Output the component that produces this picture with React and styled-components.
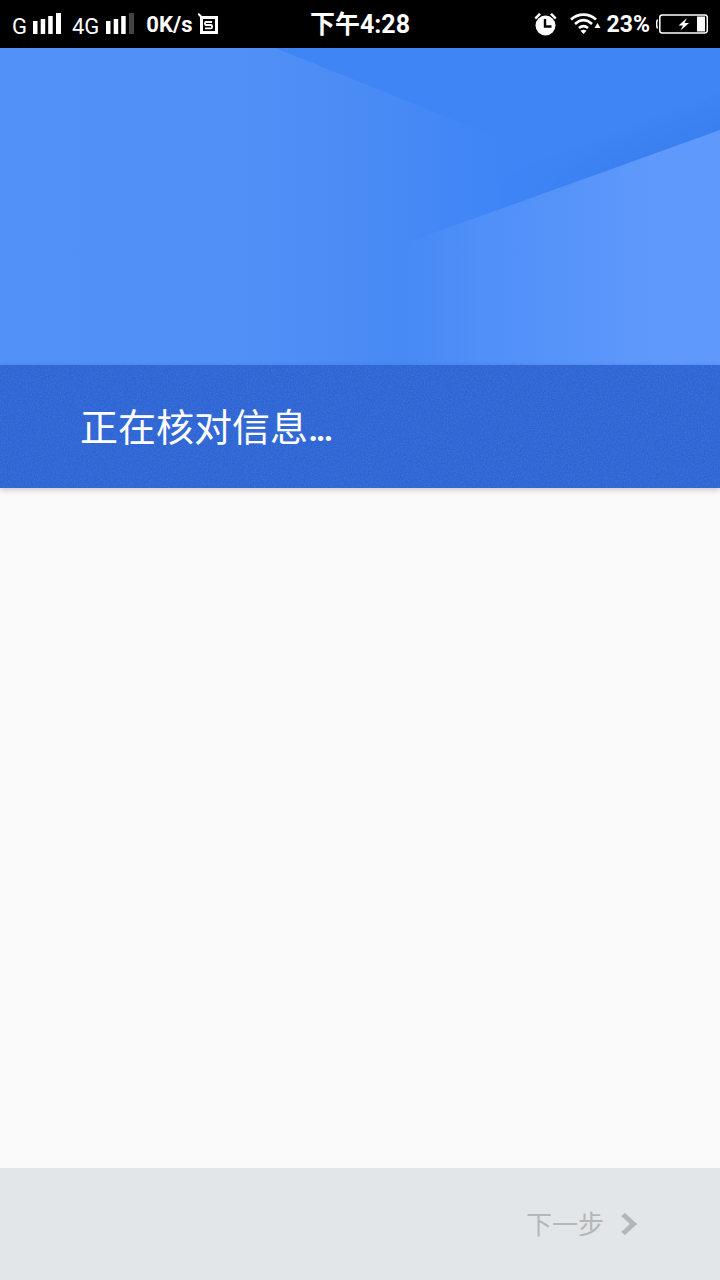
import React from "react";
import styled, { createGlobalStyle } from "styled-components";

const GlobalStyle = createGlobalStyle`
  html, body {
    margin: 0;
    padding: 0;
    background: #fafafa;
  }
`;

const Page = styled.div`
  width: 720px;
  height: 1280px;
  display: flex;
  flex-direction: column;
  overflow: hidden;
  background: #fafafa;
  font-family: Roboto, "Noto Sans CJK SC", sans-serif;
`;

const StatusBar = styled.div`
  height: 48px;
  flex: none;
  background: #000;
  color: #fff;
  display: grid;
  grid-template-columns: 1fr auto 1fr;
  align-items: center;
  padding: 0 12px;
  box-sizing: border-box;
`;

const StatusLeft = styled.div`
  display: flex;
  align-items: center;
`;

const StatusRight = styled.div`
  display: flex;
  align-items: center;
  justify-content: flex-end;
`;

const Net = styled.span`
  font-size: 22px;
  line-height: 26px;
  margin: 5px 0 0 ${p => p.$left || 0}px;
`;

const Speed = styled.span`
  font-size: 22px;
  font-weight: 700;
  line-height: 26px;
  margin: 2px 0 0 11px;
`;

const Clock = styled.span`
  font-size: 25px;
  font-weight: 700;
  line-height: 30px;
  margin-top: 1px;
`;

const Percent = styled.span`
  font-size: 23px;
  font-weight: 700;
  line-height: 26px;
  margin: 2px 0 0 5px;
`;

const Icon = styled.svg`
  display: block;
  flex: none;
  margin-left: ${p => p.$left || 0}px;
`;

const Hero = styled.div`
  height: 317px;
  flex: none;
`;

const HeroArt = styled.svg`
  display: block;
  width: 720px;
  height: 317px;
`;

const Band = styled.div`
  height: 123px;
  flex: none;
  background: #2c64d4;
  box-shadow: 0 2px 6px rgba(0, 0, 0, 0.2);
  display: flex;
  align-items: center;
  padding-left: 80px;
  padding-top: 2px;
  box-sizing: border-box;
  position: relative;
`;

const BandNoise = styled.svg`
  position: absolute;
  left: 0;
  top: 0;
  width: 720px;
  height: 123px;
  opacity: 0.1;
`;

const Title = styled.div`
  position: relative;
  color: #fff;
  font-size: 38px;
  line-height: 48px;
`;

const Dots = styled.span`
  letter-spacing: -3px;
  font-weight: 500;
`;

const Body = styled.div`
  flex: 1;
`;

const Footer = styled.div`
  height: 112px;
  flex: none;
  background: #e2e6e9;
  display: flex;
  align-items: center;
  justify-content: flex-end;
  padding-right: 82px;
  box-sizing: border-box;
`;

const NextLabel = styled.span`
  color: #b3b7ba;
  font-size: 26px;
  line-height: 32px;
  margin: 2px 16px 0 0;
`;

const Signal = ({ last, left }) => (
  <Icon $left={left} width="30" height="22" viewBox="0 0 30 22">
    <rect x="1" y="8" width="4.500" height="13" fill="#fff" />
    <rect x="8.700" y="6" width="4.500" height="15" fill="#fff" />
    <rect x="16.200" y="3" width="4.500" height="18" fill="#fff" />
    <rect x="24" y="0" width="5" height="21" fill={last} />
  </Icon>
);

const SimIcon = () => (
  <Icon $left={6} width="20" height="22" viewBox="0 0 20 22">
    <path d="M0 0.500 3.500 4" fill="none" stroke="#fff" strokeWidth="2" />
    <rect x="3.500" y="4.500" width="15" height="15" fill="none" stroke="#fff" strokeWidth="3" />
    <path
      d="M14 9H8Q7 9 7 10.300V11Q7 12 8 12H13Q14 12 14 13V14Q14 15.300 13 15.300H7"
      fill="none"
      stroke="#fff"
      strokeWidth="1.800"
    />
  </Icon>
);

const AlarmIcon = () => (
  <Icon $left={2} width="23" height="24" viewBox="0 0 23 24">
    <circle cx="11.500" cy="13.500" r="10" fill="#fff" />
    <path d="M0.500 5.500 5 1 7 2.500 2 7.500ZM22.500 5.500 18 1 16 2.500 21 7.500Z" fill="#fff" />
    <path d="M11 7v7.500h6.500" fill="none" stroke="#000" strokeWidth="2.400" />
  </Icon>
);

const WifiIcon = () => (
  <Icon $left={13} width="32" height="22" viewBox="0 0 32 22">
    <path d="M1 6.500C8 0 19 0 26 6.500" fill="none" stroke="#fff" strokeWidth="2.600" />
    <path d="M5 11C10.500 6 16.500 6 22 11" fill="none" stroke="#fff" strokeWidth="2.600" />
    <path d="M9 15C12 12.500 15 12.500 18 15" fill="none" stroke="#fff" strokeWidth="2.600" />
    <path d="M13.500 21 10.500 17.800C12.500 16.500 14.500 16.500 16.500 17.800Z" fill="#fff" />
    <path d="M24.500 15 27.500 10 30.500 15Z" fill="#fff" />
  </Icon>
);

const BatteryIcon = () => (
  <Icon $left={6} width="52" height="20" viewBox="0 0 52 20">
    <path d="M1.500 5.500C0.500 8 0.500 12 1.500 14.500" fill="none" stroke="#fff" strokeWidth="1.500" />
    <rect x="3.800" y="1" width="47.500" height="18" rx="2.500" fill="none" stroke="#fff" strokeWidth="1.500" />
    <rect x="41" y="2.500" width="8" height="15" fill="#fff" />
    <path d="M31 4 22.500 11.500h4.500l-2.500 5 8.500-7.500h-4.500Z" fill="#fff" />
  </Icon>
);

const ChevronIcon = () => (
  <Icon width="18" height="26" viewBox="0 0 18 26">
    <path d="M3 3.500 13.500 13 3 22.500" fill="none" stroke="#b3b7ba" strokeWidth="5" />
  </Icon>
);

const HeroDrawing = () => (
  <HeroArt viewBox="0 0 720 317">
    <defs>
      <linearGradient id="base" gradientUnits="userSpaceOnUse" x1="0" y1="0" x2="720" y2="0">
        <stop offset="0" stopColor="#5291f7" />
        <stop offset="0.33" stopColor="#5190f6" />
        <stop offset="0.5" stopColor="#4a8bf5" />
        <stop offset="0.7" stopColor="#3f85f6" />
        <stop offset="1" stopColor="#3f85f6" />
      </linearGradient>
      <linearGradient id="light" gradientUnits="userSpaceOnUse" x1="400" y1="0" x2="660" y2="0">
        <stop offset="0" stopColor="#5f99fb" stopOpacity="0" />
        <stop offset="0.35" stopColor="#5f99fb" stopOpacity="0.55" />
        <stop offset="1" stopColor="#5f99fb" stopOpacity="1" />
      </linearGradient>
      <linearGradient id="shade" gradientUnits="userSpaceOnUse" x1="706" y1="45" x2="720" y2="82">
        <stop offset="0" stopColor="#3272e2" stopOpacity="0" />
        <stop offset="1" stopColor="#3272e2" stopOpacity="0.3" />
      </linearGradient>
      <linearGradient id="shadeFade" gradientUnits="userSpaceOnUse" x1="500" y1="0" x2="620" y2="0">
        <stop offset="0" stopColor="#000" />
        <stop offset="1" stopColor="#fff" />
      </linearGradient>
      <mask id="shadeMask" maskUnits="userSpaceOnUse" x="0" y="0" width="720" height="317">
        <rect width="720" height="317" fill="url(#shadeFade)" />
      </mask>
    </defs>
    <rect width="720" height="317" fill="url(#base)" />
    <path d="M275 0H720V82L500 165V90Z" fill="#3f85f6" />
    <path d="M720 45V82L500 165V128Z" fill="url(#shade)" mask="url(#shadeMask)" />
    <path d="M720 82V317H400V197Z" fill="url(#light)" />
  </HeroArt>
);

export default function App() {
  return (
    <Page>
      <GlobalStyle />
      <StatusBar>
        <StatusLeft>
          <Net>G</Net>
          <Signal last="#fff" left={5} />
          <Net $left={10}>4G</Net>
          <Signal last="#444" left={6} />
          <Speed>0K/s</Speed>
          <SimIcon />
        </StatusLeft>
        <Clock>下午4:28</Clock>
        <StatusRight>
          <AlarmIcon />
          <WifiIcon />
          <Percent>23%</Percent>
          <BatteryIcon />
        </StatusRight>
      </StatusBar>
      <Hero>
        <HeroDrawing />
      </Hero>
      <Band>
        <BandNoise>
          <filter id="grain">
            <feTurbulence type="fractalNoise" baseFrequency="0.7" numOctaves="2" />
            <feColorMatrix values="0 0 0 0 1  0 0 0 0 1  0 0 0 0 1  0 0 0 1.4 -0.4" />
          </filter>
          <rect width="720" height="123" filter="url(#grain)" />
        </BandNoise>
        <Title>
          正在核对信息<Dots>...</Dots>
        </Title>
      </Band>
      <Body />
      <Footer>
        <NextLabel>下一步</NextLabel>
        <ChevronIcon />
      </Footer>
    </Page>
  );
}
